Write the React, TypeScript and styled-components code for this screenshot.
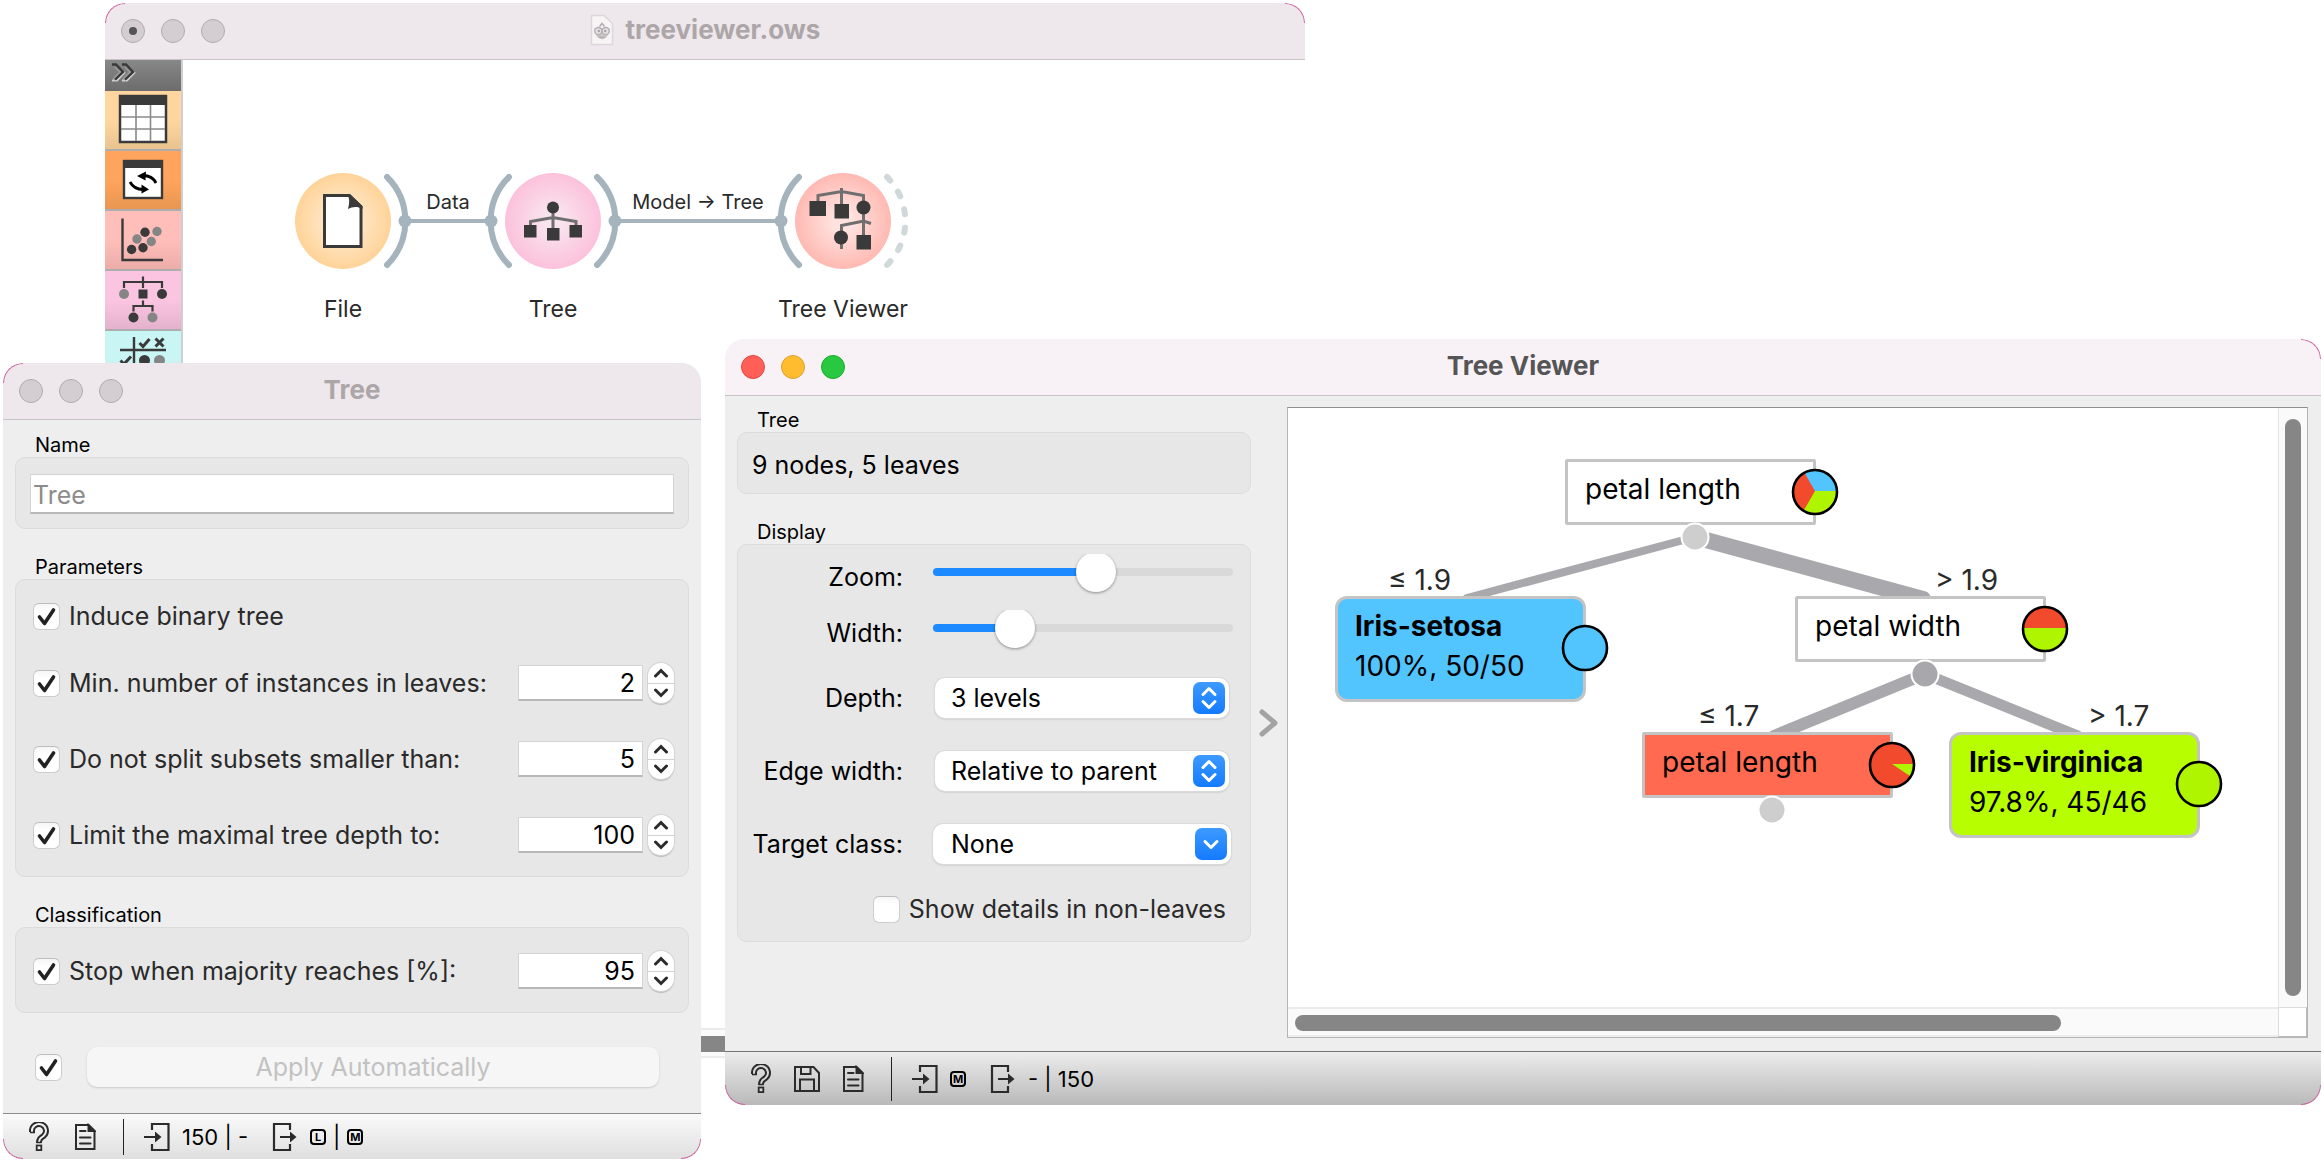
import React, { useId, useState } from "react";
import styled, { createGlobalStyle, css } from "styled-components";

const GlobalStyle = createGlobalStyle`
  *, *::before, *::after { box-sizing: border-box; }
  body {
    margin: 0;
    background: #fff;
    font-family: Inter, "Noto Sans", "Liberation Sans", sans-serif;
    color: #000;
  }
  button, input, select { font: inherit; color: inherit; margin: 0; }
`;

/* ---------- windows ---------- */

const Desktop = styled.main`
  position: relative;
  min-height: 100vh;
  overflow: hidden;
`;

const Win = styled.section`
  position: absolute;
  border-radius: 20px;
  overflow: hidden;
  background: #eee;
`;

const CanvasWindow = styled(Win)`
  left: 105px;
  top: 3px;
  width: 1200px;
  background: #fff;
`;

const TreeWindow = styled(Win)`
  left: 3px;
  top: 363px;
  width: 698px;
`;

const ViewerWindow = styled(Win)`
  left: 725px;
  right: 3px;
  top: 339px;
`;

const Corner = styled.span<{ $v: "top" | "bottom"; $h: "left" | "right" }>`
  position: absolute;
  ${(p) => p.$v}: 0;
  ${(p) => p.$h}: 0;
  width: 20px;
  height: 20px;
  border-${(p) => p.$v}: 1px solid #d0629f;
  border-${(p) => p.$h}: 1px solid #d0629f;
  border-${(p) => p.$v}-${(p) => p.$h}-radius: 20px;
  pointer-events: none;
`;

const TitleBar = styled.header<{ $active?: boolean }>`
  display: grid;
  grid-template-columns: 1fr auto 1fr;
  align-items: center;
  height: 57px;
  padding: 0 16px;
  background: ${(p) => (p.$active ? "#f8f2f7" : "#eee7eb")};
  border-bottom: 1px solid #c8c3c6;
`;

const Lights = styled.div`
  display: flex;
  gap: 16px;
`;

const Light = styled.button<{ $fill?: string; $edge?: string; $dot?: boolean }>`
  display: grid;
  place-items: center;
  width: 24px;
  height: 24px;
  padding: 0;
  border-radius: 50%;
  background: ${(p) => p.$fill ?? "#d4ced2"};
  border: 1px solid ${(p) => p.$edge ?? "#b0abae"};
  ${(p) =>
    p.$dot &&
    css`
      &::after {
        content: "";
        width: 8px;
        height: 8px;
        border-radius: 50%;
        background: #555;
      }
    `}
`;

const Title = styled.h1<{ $active?: boolean }>`
  display: flex;
  align-items: center;
  gap: 12px;
  margin: 0;
  padding-bottom: 2px;
  font-size: 26px;
  line-height: 32px;
  font-weight: 700;
  color: ${(p) => (p.$active ? "#555" : "#aca6a9")};
`;

/* ---------- workflow window ---------- */

const WorkBody = styled.div`
  display: grid;
  grid-template-columns: 78px 1fr;
`;

const Sidebar = styled.nav`
  border-right: 2px solid #cfcfd3;
  background: #fff;
`;

const Expand = styled.button`
  display: block;
  width: 100%;
  height: 31px;
  padding: 0;
  border: 0;
  background: linear-gradient(#888, #6c6c6c);
`;

const Category = styled.button<{ $top: string; $bottom: string }>`
  display: block;
  width: 100%;
  height: 60px;
  padding: 0;
  border: 0;
  border-bottom: 2px solid #adadad;
  background: linear-gradient(${(p) => p.$top} 50%, ${(p) => p.$bottom});
`;

const Block = styled.svg`
  display: block;
`;

const Scheme = styled.div`
  display: flex;
  flex-direction: column;
  min-height: 998px;
`;

const SchemeCanvas = styled.div`
  position: relative;
  flex: 1;
`;

const Links = styled.svg`
  position: absolute;
  left: 0;
  top: 0;
`;

const Caption = styled.span<{ $x: number; $y: number; $small?: boolean }>`
  position: absolute;
  left: ${(p) => p.$x}px;
  top: ${(p) => p.$y}px;
  transform: translateX(-50%);
  white-space: nowrap;
  color: #2a2a2a;
  font-size: ${(p) => (p.$small ? 20 : 23)}px;
  line-height: 28px;
`;

const HScroll = styled.div`
  height: 30px;
  padding: 6px 7px;
  border-top: 2px solid #ebebeb;
  border-bottom: 2px solid #ececec;
  background: #fafafa;
`;

const HThumb = styled.div<{ $share?: string }>`
  width: ${(p) => p.$share ?? "100%"};
  height: 16px;
  border-radius: 8px;
  background: #868686;
`;

/* ---------- shared form parts ---------- */

const Legend = styled.h2`
  margin: 0;
  padding-left: 20px;
  font-size: 20px;
  line-height: 24px;
  font-weight: 400;
`;

const Group = styled.section`
  display: flex;
  flex-direction: column;
`;

const Panel = styled.div<{ $pad: string }>`
  padding: ${(p) => p.$pad};
  border: 1px solid #dcdcdc;
  border-radius: 10px;
  background: #e7e7e7;
`;

const CheckBox = styled.span`
  position: relative;
  flex: none;
  display: block;
  width: 27px;
  height: 27px;
`;

const CheckInput = styled.input`
  appearance: none;
  display: block;
  width: 27px;
  height: 27px;
  border-radius: 6px;
  border: 1px solid #cdcdcd;
  border-top-color: #bdbdbd;
  background: linear-gradient(#f6f6f6, #fff 30%);
`;

const CheckMark = styled.svg`
  position: absolute;
  inset: 0;
  pointer-events: none;
`;

const CheckLabel = styled.label`
  font-size: 25px;
  line-height: 32px;
  color: #2a2a2a;
  white-space: nowrap;
`;

function Check({ id, initial = true, label }: { id: string; initial?: boolean; label?: string }) {
  const [on, setOn] = useState(initial);
  return (
    <CheckBox>
      <CheckInput id={id} type="checkbox" aria-label={label} checked={on} onChange={(e) => setOn(e.target.checked)} />
      {on && (
        <CheckMark viewBox="0 0 27 27" aria-hidden="true">
          <path d="M6.5 14 L11.5 20.5 L20.5 7" fill="none" stroke="#222" strokeWidth="3.6" strokeLinecap="round" strokeLinejoin="round" />
        </CheckMark>
      )}
    </CheckBox>
  );
}

/* ---------- tree settings window ---------- */

const SettingsBody = styled.div`
  display: flex;
  flex-direction: column;
  gap: 26px;
  padding: 13px 12px 26px;
`;

const NameInput = styled.input`
  display: block;
  width: 100%;
  height: 40px;
  padding: 2px 2px 0;
  border: 1px solid #d4d4d4;
  border-bottom: 2px solid #b8b8b8;
  border-radius: 0;
  background: #fff;
  font-size: 25px;
  &::placeholder { color: #8c8c8c; opacity: 1; }
`;

const OptionList = styled.div`
  display: flex;
  flex-direction: column;
  gap: 36px;
`;

const OptionRow = styled.div`
  display: flex;
  align-items: center;
  gap: 9px;
  height: 40px;
`;

const FirstOption = styled(OptionRow)`
  margin-bottom: 27px;
`;

const Spin = styled.div`
  display: flex;
  align-items: center;
  gap: 5px;
  margin-left: auto;
`;

const SpinInput = styled.input`
  width: 125px;
  height: 36px;
  padding: 0 7px;
  border: 1px solid #d4d4d4;
  border-bottom: 2px solid #b8b8b8;
  border-radius: 0;
  background: #fff;
  text-align: right;
  font-size: 25px;
  appearance: textfield;
  &::-webkit-inner-spin-button { appearance: none; margin: 0; }
`;

const Stepper = styled.div`
  display: flex;
  flex-direction: column;
  width: 26px;
  height: 40px;
  border-radius: 13px;
  background: #fff;
  overflow: hidden;
  box-shadow: 0 0 0 1px #d4d4d4, 0 2px 1px #bbb;
`;

const Step = styled.button`
  display: grid;
  place-items: center;
  flex: 1;
  padding: 0;
  border: 0;
  background: none;
  & + & { border-top: 1px solid #d0d0d0; }
`;

function SpinRow({ text, start }: { text: string; start: number }) {
  const id = useId();
  const [n, setN] = useState(start);
  return (
    <OptionRow>
      <Check id={id} />
      <CheckLabel htmlFor={id}>{text}</CheckLabel>
      <Spin>
        <SpinInput type="number" aria-label={text} value={n} onChange={(e) => setN(Number(e.target.value))} />
        <Stepper>
          <Step type="button" aria-label="Increase" onClick={() => setN(n + 1)}>
            <svg width="16" height="10" viewBox="0 0 16 10">
              <path d="M2.5 8 L8 2.5 L13.5 8" fill="none" stroke="#2a2a2a" strokeWidth="3" strokeLinecap="round" />
            </svg>
          </Step>
          <Step type="button" aria-label="Decrease" onClick={() => setN(n - 1)}>
            <svg width="16" height="10" viewBox="0 0 16 10">
              <path d="M2.5 2 L8 7.5 L13.5 2" fill="none" stroke="#2a2a2a" strokeWidth="3" strokeLinecap="round" />
            </svg>
          </Step>
        </Stepper>
      </Spin>
    </OptionRow>
  );
}

const ApplyRow = styled.div`
  display: flex;
  align-items: center;
  gap: 25px;
  padding: 8px 30px 0 20px;
`;

const ApplyButton = styled.button`
  flex: 1;
  height: 40px;
  padding: 0;
  border: 0;
  border-radius: 10px;
  background: #f6f6f6;
  box-shadow: 0 1px 2px #c8c8c8;
  font-size: 25px;
  line-height: 38px;
  color: #c2c2c2;
`;

/* ---------- status bar ---------- */

const StatusBar = styled.footer<{ $tall?: boolean }>`
  display: flex;
  align-items: center;
  height: ${(p) => (p.$tall ? 54 : 46)}px;
  padding-left: 13px;
  border-top: 1px solid ${(p) => (p.$tall ? "#757575" : "#8c8c8c")};
  background: ${(p) => (p.$tall ? "linear-gradient(#ececec, #b9b9b9)" : "linear-gradient(#fafafa, #dfdfdf)")};
  font-size: 22px;
  line-height: 28px;
`;

const Tool = styled.button`
  display: grid;
  place-items: center;
  width: 46px;
  height: 32px;
  padding: 0;
  border: 0;
  background: none;
`;

const Divider = styled.span<{ $tall?: boolean }>`
  width: 1px;
  height: ${(p) => (p.$tall ? 44 : 36)}px;
  margin: 0 20px 0 15px;
  background: #222;
`;

const Port = styled.span`
  display: flex;
  align-items: center;
  gap: 12px;
  margin-right: 24px;
  white-space: pre;
`;

const PortValue = styled.span`
  display: flex;
  align-items: center;
  gap: 7px;
`;

const KeyCap = styled.span`
  display: grid;
  place-items: center;
  width: 16px;
  height: 16px;
  border: 2px solid #000;
  border-radius: 4px;
  font-size: 11px;
  line-height: 12px;
  font-weight: 700;
`;

function HelpIcon({ inner }: { inner: string }) {
  const hook = "M4 10 V9.5 A7 6.8 0 1 1 15.5 14 C12.5 16 11 17 11 21";
  return (
    <svg width="22" height="30" viewBox="0 0 22 30" aria-hidden="true">
      <path d={hook} fill="none" stroke="#2b2b2b" strokeWidth="6" />
      <path d={hook} fill="none" stroke={inner} strokeWidth="2" />
      <path d="M2 10.5 H7 M8.5 20.5 H13.5" stroke="#2b2b2b" strokeWidth="1.6" />
      <rect x="8.7" y="23.5" width="4.6" height="4.6" fill={inner} stroke="#2b2b2b" strokeWidth="1.8" />
    </svg>
  );
}

function SaveIcon() {
  return (
    <svg width="28" height="28" viewBox="0 0 28 28" aria-hidden="true" fill="none" stroke="#2b2b2b" strokeWidth="2">
      <path d="M2 2 H20.5 L26 8 V26 H2 Z" />
      <path d="M8 2 V9 H17.5 V2 M7 26 V14.5 H21 V26" />
    </svg>
  );
}

function ReportIcon() {
  return (
    <svg width="22" height="28" viewBox="0 0 22 28" aria-hidden="true" fill="none" stroke="#2b2b2b" strokeWidth="2">
      <path d="M2 2 H14.5 L20.5 8 V26 H2 Z" />
      <path d="M14.5 2 V8 H20.5 Z" fill="#2b2b2b" />
      <path d="M6 8 H11.5 M6 14.5 H16.5 M6 20.5 H16.5" strokeLinecap="round" />
    </svg>
  );
}

function InputIcon() {
  return (
    <svg width="26" height="30" viewBox="0 0 26 30" aria-hidden="true" fill="none" stroke="#2b2b2b" strokeWidth="2.2">
      <path d="M8 8 V2 H24.5 V28 H8 V22 M0 15 H13" />
      <path d="M11 9.5 L17.5 15 L11 20.5 Z" fill="#2b2b2b" stroke="none" />
    </svg>
  );
}

function OutputIcon() {
  return (
    <svg width="26" height="30" viewBox="0 0 26 30" aria-hidden="true" fill="none" stroke="#2b2b2b" strokeWidth="2.2">
      <path d="M18 8 V2 H2 V28 H18 V22 M8 15 H20" />
      <path d="M18 9.5 L24.5 15 L18 20.5 Z" fill="#2b2b2b" stroke="none" />
    </svg>
  );
}

/* ---------- tree viewer window ---------- */

const ViewerBody = styled.div`
  display: grid;
  grid-template-columns: 514px 36px 1fr;
  padding: 11px 13px 13px 12px;
`;

const Controls = styled.div`
  display: flex;
  flex-direction: column;
  gap: 26px;
  padding-top: 1px;
`;

const Info = styled.p`
  margin: 0;
  font-size: 25px;
  line-height: 32px;
`;

const Form = styled.div`
  display: flex;
  flex-direction: column;
`;

const Field = styled.div<{ $gap: number; $slider?: boolean }>`
  display: grid;
  grid-template-columns: 165px 1fr;
  column-gap: 30px;
  align-items: ${(p) => (p.$slider ? "start" : "center")};
  margin-top: ${(p) => p.$gap}px;
  font-size: 25px;
  line-height: ${(p) => (p.$slider ? 46 : 40)}px;
`;

const FieldLabel = styled.label`
  text-align: right;
  white-space: nowrap;
`;

const SliderClip = styled.div`
  height: 42px;
  overflow: hidden;
`;

const Slider = styled.input`
  appearance: none;
  display: block;
  width: 100%;
  height: 36px;
  background: transparent;
  &::-webkit-slider-runnable-track {
    height: 8px;
    border-radius: 4px;
    background: linear-gradient(to right, #1d8aff var(--fill), #d9d9d9 var(--fill));
  }
  &::-webkit-slider-thumb {
    appearance: none;
    width: 40px;
    height: 40px;
    margin-top: -16px;
    border-radius: 50%;
    background: #fff;
    box-shadow: 0 1px 3px rgba(0, 0, 0, 0.4);
  }
`;

function SliderField({ text, start, gap }: { text: string; start: number; gap: number }) {
  const id = useId();
  const [v, setV] = useState(start);
  return (
    <Field $gap={gap} $slider>
      <FieldLabel htmlFor={id}>{text}</FieldLabel>
      <SliderClip>
        <Slider
          id={id}
          type="range"
          min={0}
          max={100}
          value={v}
          onChange={(e) => setV(Number(e.target.value))}
          style={{ "--fill": `${v}%` } as React.CSSProperties}
        />
      </SliderClip>
    </Field>
  );
}

const SelectBox = styled.div<{ $wide?: boolean }>`
  position: relative;
  height: 40px;
  margin: ${(p) => (p.$wide ? "0 2px 0 0" : "0 4px 0 2px")};
`;

const Select = styled.select<{ $wide?: boolean }>`
  appearance: none;
  display: block;
  width: 100%;
  height: 40px;
  padding: 0 40px 2px ${(p) => (p.$wide ? 18 : 16)}px;
  border: 0;
  border-radius: 10px;
  background: #fff;
  box-shadow: 0 0 0 1px #dadada, 0 1px 2px #aaa;
  font-size: 25px;
`;

const SelectArrow = styled.svg`
  position: absolute;
  right: 4px;
  top: 4px;
  border-radius: 7px;
  background: linear-gradient(#3d9aff, #147aff);
  pointer-events: none;
`;

function SelectField({ text, options, gap, combo }: { text: string; options: string[]; gap: number; combo?: boolean }) {
  const id = useId();
  return (
    <Field $gap={gap}>
      <FieldLabel htmlFor={id}>{text}</FieldLabel>
      <SelectBox $wide={combo}>
        <Select id={id} $wide={combo}>
          {options.map((o) => (
            <option key={o}>{o}</option>
          ))}
        </Select>
        <SelectArrow width="32" height="32" viewBox="0 0 32 32" aria-hidden="true">
          <path
            d={combo ? "M10 13.5 L16 19.5 L22 13.5" : "M10 12.5 L16 6.5 L22 12.5 M10 19.5 L16 25.5 L22 19.5"}
            fill="none"
            stroke="#fff"
            strokeWidth="3"
            strokeLinecap="round"
            strokeLinejoin="round"
          />
        </SelectArrow>
      </SelectBox>
    </Field>
  );
}

const DetailRow = styled.div`
  display: flex;
  align-items: center;
  justify-content: flex-end;
  gap: 9px;
  height: 28px;
  margin-top: 31px;
  padding-right: 7px;
`;

const Collapse = styled.button`
  align-self: center;
  display: grid;
  place-items: center;
  height: 40px;
  padding: 0;
  border: 0;
  background: none;
`;

const View = styled.div`
  display: grid;
  grid-template-columns: 1fr 29px;
  grid-template-rows: minmax(599px, auto) 30px;
  border: 1px solid #b5b5b5;
  border-top-color: #8f8f8f;
  background: #fff;
`;

const TreeCanvas = styled.div`
  position: relative;
  overflow: hidden;
`;

const VScroll = styled.div`
  display: flex;
  justify-content: center;
  padding: 11px 0;
  border-left: 1px solid #e6e6e6;
  background: #fafafa;
`;

const VThumb = styled.div`
  width: 16px;
  border-radius: 8px;
  background: #868686;
`;

const ScrollCorner = styled.div`
  border: 1px solid #ddd;
  border-right-color: #bbb;
  border-bottom-color: #bbb;
  background: #fff;
`;

const NodeBox = styled.div<{ $x: number; $y: number; $fill: string; $leaf?: boolean }>`
  position: absolute;
  left: ${(p) => p.$x}px;
  top: ${(p) => p.$y}px;
  width: 251px;
  height: ${(p) => (p.$leaf ? 106 : 66)}px;
  padding: 7px 17px;
  border: 3px solid #c4c4c4;
  border-radius: ${(p) => (p.$leaf ? 12 : 2)}px;
  background: ${(p) => p.$fill};
  font-size: 28px;
  line-height: 40px;
  white-space: nowrap;
`;

const NodeLine = styled.div<{ $bold?: boolean }>`
  font-weight: ${(p) => (p.$bold ? 700 : 400)};
`;

const Pie = styled.svg<{ $leaf?: boolean }>`
  position: absolute;
  right: -26px;
  top: ${(p) => (p.$leaf ? 25 : 6)}px;
`;

const Split = styled.span<{ $x: number; $y: number }>`
  position: absolute;
  left: ${(p) => p.$x}px;
  top: ${(p) => p.$y}px;
  font-size: 28px;
  line-height: 32px;
  color: #2a2a2a;
  white-space: nowrap;
`;

type Slice = { from: number; to: number; color: string };

function slicePath({ from, to }: Slice) {
  const point = (deg: number) => {
    const a = (deg * Math.PI) / 180;
    return `${24 + 22 * Math.cos(a)} ${23 - 22 * Math.sin(a)}`;
  };
  return `M24 23 L${point(from)} A22 22 0 ${to - from > 180 ? 1 : 0} 0 ${point(to)} Z`;
}

const BLUE = "#52c5ff";
const RED = "#f24a2d";
const GREEN = "#b0f500";

type TreeNode = {
  x: number;
  y: number;
  fill: string;
  lines: string[];
  leaf?: boolean;
  base: string;
  slices: Slice[];
};

const NODES: TreeNode[] = [
  {
    x: 277, y: 51, fill: "#fff", lines: ["petal length"], base: RED,
    slices: [
      { from: 0, to: 120, color: BLUE },
      { from: 240, to: 360, color: GREEN },
    ],
  },
  { x: 47, y: 188, fill: BLUE, lines: ["Iris-setosa", "100%, 50/50"], leaf: true, base: BLUE, slices: [] },
  { x: 507, y: 188, fill: "#fff", lines: ["petal width"], base: GREEN, slices: [{ from: 0, to: 180, color: RED }] },
  { x: 354, y: 324, fill: "#ff6a50", lines: ["petal length"], base: RED, slices: [{ from: 326, to: 360, color: GREEN }] },
  { x: 661, y: 324, fill: "#b7ff00", lines: ["Iris-virginica", "97.8%, 45/46"], leaf: true, base: GREEN, slices: [] },
];

const EDGES = [
  { x1: 407, y1: 129, x2: 179, y2: 190, w: 8 },
  { x1: 407, y1: 129, x2: 635, y2: 191, w: 16 },
  { x1: 637, y1: 266, x2: 486, y2: 328, w: 12 },
  { x1: 637, y1: 266, x2: 790, y2: 328, w: 11 },
];

const SPLITS = [
  { x: 100, y: 156, text: "≤ 1.9" },
  { x: 647, y: 156, text: "> 1.9" },
  { x: 410, y: 292, text: "≤ 1.7" },
  { x: 800, y: 292, text: "> 1.7" },
];

const JOINTS = [
  { x: 407, y: 129, color: "#cecece" },
  { x: 637, y: 266, color: "#a8a8ac" },
  { x: 484, y: 402, color: "#cecece" },
];

const JointLayer = styled(Links)`
  pointer-events: none;
`;

function TreeDrawing() {
  return (
    <TreeCanvas>
      <Links width="990" height="599" viewBox="0 0 990 599" aria-hidden="true">
        {EDGES.map((e, i) => (
          <line key={i} x1={e.x1} y1={e.y1} x2={e.x2} y2={e.y2} stroke="#a9a8ad" strokeWidth={e.w} strokeLinecap="round" />
        ))}
      </Links>
      {NODES.map((n, i) => (
        <NodeBox key={i} $x={n.x} $y={n.y} $fill={n.fill} $leaf={n.leaf}>
          {n.lines.map((t, k) => (
            <NodeLine key={t} $bold={n.leaf && k === 0}>{t}</NodeLine>
          ))}
          <Pie $leaf={n.leaf} width="48" height="48" viewBox="0 0 48 48" aria-hidden="true">
            <circle cx="24" cy="24" r="22" fill={n.base} />
            {n.slices.map((s) => (
              <path key={s.from} d={slicePath(s)} fill={s.color} />
            ))}
            <circle cx="24" cy="24" r="22" fill="none" stroke="#000" strokeWidth="2.6" />
          </Pie>
        </NodeBox>
      ))}
      <JointLayer width="990" height="599" viewBox="0 0 990 599" aria-hidden="true">
        {JOINTS.map((j, i) => (
          <circle key={i} cx={j.x} cy={j.y} r="13.5" fill={j.color} stroke="#fff" strokeWidth="2" />
        ))}
      </JointLayer>
      {SPLITS.map((s) => (
        <Split key={s.text} $x={s.x} $y={s.y}>{s.text}</Split>
      ))}
    </TreeCanvas>
  );
}

/* ---------- drawings of the workflow window ---------- */

const D = "#3a3a3a";
const G = "#858585";

function CategoryIcons() {
  return (
    <>
      <Category type="button" aria-label="Data" $top="#ffd6a0" $bottom="#e9c48f">
        <Block width="76" height="58" viewBox="0 0 76 58">
          <rect x="15" y="5" width="46" height="46" fill="#fff" stroke={D} strokeWidth="2.5" />
          <rect x="14" y="4" width="48" height="10" fill={D} />
          <path d="M31 14 V50 M45.5 14 V50 M16 26 H60 M16 38 H60" stroke="#8a8a8a" strokeWidth="1.6" />
        </Block>
      </Category>
      <Category type="button" aria-label="Transform" $top="#ffa45c" $bottom="#e89652">
        <Block width="76" height="58" viewBox="0 0 76 58">
          <rect x="19" y="10" width="38" height="37" fill="#fff" stroke={D} strokeWidth="2.4" />
          <rect x="18" y="9" width="40" height="8" fill={D} />
          <path d="M51 32 C48 26 44 24.5 38 24.5 M25 31 C28 36.5 32 38.5 38 38.5" fill="none" stroke="#000" strokeWidth="2.8" />
          <path d="M32 25 L41 20.5 L40.5 29.5 Z M44 38.5 L36.5 33.5 L36.5 42.5 Z" />
        </Block>
      </Category>
      <Category type="button" aria-label="Visualize" $top="#ffbeb9" $bottom="#ecaca8">
        <Block width="76" height="58" viewBox="0 0 76 58">
          <path d="M17.5 7.5 V49 H58" fill="none" stroke={D} strokeWidth="2.4" />
          <g fill={G}>
            <circle cx="52" cy="20.5" r="4.7" />
            <circle cx="32" cy="28" r="4.7" />
            <circle cx="46.3" cy="30.5" r="4.7" />
          </g>
          <g fill={D}>
            <circle cx="40" cy="21.3" r="4.7" />
            <circle cx="26.6" cy="38.5" r="4.7" />
            <circle cx="38" cy="36.8" r="4.7" />
          </g>
        </Block>
      </Category>
      <Category type="button" aria-label="Model" $top="#fbc5e2" $bottom="#e4b2cd">
        <Block width="76" height="58" viewBox="0 0 76 58">
          <path d="M19 17 V11 H57 V17 M38 5.5 V17 M38 29.5 V35 M28.5 40.5 V35 H47.5 V40.5" fill="none" stroke={D} strokeWidth="2.2" />
          <rect x="33.5" y="18.5" width="9" height="9" fill={D} />
          <g fill={G}>
            <circle cx="19" cy="23" r="5" />
            <circle cx="47.5" cy="46.5" r="5" />
          </g>
          <g fill={D}>
            <circle cx="57" cy="23" r="5" />
            <circle cx="28.5" cy="46.5" r="5" />
          </g>
        </Block>
      </Category>
      <Category type="button" aria-label="Evaluate" $top="#c9f6f5" $bottom="#b6dfde">
        <Block width="76" height="58" viewBox="0 0 76 58">
          <path d="M29 6 V52 M15 19 H61" fill="none" stroke={D} strokeWidth="2.4" />
          <path
            d="M34.5 12 L38 15.5 L44.5 8 M50.5 7.5 L58.5 15.5 M58.5 7.5 L50.5 15.5 M15.5 29.5 L19 33 L26 25.5"
            fill="none"
            stroke={D}
            strokeWidth="3"
          />
          <circle cx="39.5" cy="29.5" r="5.5" fill={D} />
          <circle cx="54.5" cy="29.5" r="5.5" fill={G} />
        </Block>
      </Category>
    </>
  );
}

function Workflow() {
  const link = "#a4b3bc";
  return (
    <Links width="900" height="300" viewBox="183 60 900 300" aria-hidden="true">
      <defs>
        <radialGradient id="gFile"><stop offset="0.2" stopColor="#ffebd1" /><stop offset="1" stopColor="#ffd398" /></radialGradient>
        <radialGradient id="gTree"><stop offset="0.2" stopColor="#f9e3ed" /><stop offset="1" stopColor="#fcc1dc" /></radialGradient>
        <radialGradient id="gView"><stop offset="0.2" stopColor="#ffe2df" /><stop offset="1" stopColor="#ffb9b2" /></radialGradient>
      </defs>
      <circle cx="343" cy="221" r="48" fill="url(#gFile)" />
      <circle cx="553" cy="221" r="48" fill="url(#gTree)" />
      <circle cx="843" cy="221" r="48" fill="url(#gView)" />
      <g fill="none" stroke={link} strokeWidth="6" strokeLinecap="round">
        <path d="M387 177 A62 62 0 0 1 387 265" />
        <path d="M509 177 A62 62 0 0 0 509 265" />
        <path d="M597 177 A62 62 0 0 1 597 265" />
        <path d="M799 177 A62 62 0 0 0 799 265" />
        <path d="M887 177 A62 62 0 0 1 887 265" stroke="#d0d8da" strokeDasharray="5 13.5" />
      </g>
      <path d="M405 221 H491 M615 221 H781" stroke={link} strokeWidth="4" />
      <g fill={link}>
        <circle cx="405" cy="221" r="6.5" />
        <circle cx="491" cy="221" r="6.5" />
        <circle cx="615" cy="221" r="6.5" />
        <circle cx="781" cy="221" r="6.5" />
      </g>

      <path d="M324.5 195.5 H349 L361 207 V246.5 H324.5 Z" fill="#fff" stroke={D} strokeWidth="3" />
      <path d="M347 194 H350 L362.5 206 V209 C357 206 352 207 348 209 C349.5 203 350 198 347 194 Z" fill={D} />

      <g fill="none" stroke="#6f6f6f" strokeWidth="3">
        <path d="M553 212 V229 M530.5 226 V221.5 L553 217.5 L576 221.5 V226" />
        <path d="M841.5 188 V205 M818 202 V195.5 L841.5 191.5 L863.5 195.5 V236 M871 223.5 L863.5 221 L841.5 225.5 V249" />
      </g>
      <g fill={D}>
        <circle cx="553" cy="207.5" r="6" />
        <rect x="524" y="225" width="12.5" height="12.5" />
        <rect x="547" y="228" width="12.5" height="12.5" />
        <rect x="569.5" y="225" width="12.5" height="12.5" />
        <rect x="809.5" y="201" width="16.5" height="15" />
        <rect x="834.5" y="204" width="14.5" height="14.5" />
        <circle cx="863.5" cy="207.5" r="7" />
        <circle cx="841" cy="237.5" r="7" />
        <rect x="856.5" y="235" width="14.5" height="14.5" />
      </g>
    </Links>
  );
}

function DocIcon() {
  return (
    <svg width="24" height="32" viewBox="0 0 24 32" aria-hidden="true">
      <path d="M1.5 1.5 H14 L22.5 9.5 V30.5 H1.5 Z" fill="#f7f4f6" stroke="#dcd7da" strokeWidth="1.5" />
      <path d="M4.5 14 C4.5 29 19.5 29 19.5 14 Z" fill="#cbc7c9" />
      <g fill="#e6e2e4" stroke="#b5b0b3" strokeWidth="1.5">
        <circle cx="8.3" cy="17" r="3.6" />
        <circle cx="15.7" cy="17" r="3.6" />
      </g>
      <g fill="#a5a0a3">
        <circle cx="8.8" cy="17" r="1.2" />
        <circle cx="15.2" cy="17" r="1.2" />
      </g>
      <path d="M9 22.5 C11 24 13 24 15 22.5 M9.5 12.5 L12 9.5 L14.5 12.5" fill="none" stroke="#b0abae" strokeWidth="1.5" />
    </svg>
  );
}

export default function App() {
  const induceId = useId();
  const autoId = useId();
  const detailId = useId();
  const nameId = useId();
  return (
    <>
      <GlobalStyle />
      <Desktop>
        <CanvasWindow>
          <TitleBar>
            <Lights>
              <Light type="button" aria-label="Close" $dot />
              <Light type="button" aria-label="Minimize" />
              <Light type="button" aria-label="Zoom" />
            </Lights>
            <Title><DocIcon />treeviewer.ows</Title>
          </TitleBar>
          <WorkBody>
            <Sidebar>
              <Expand type="button" aria-label="Expand toolbox">
                <Block width="76" height="31" viewBox="0 0 76 31">
                  <path d="M7 20.5 H12 L20 12 M17 20.5 H22 L30 12" fill="none" stroke="#cfcfcf" strokeWidth="2" />
                  <path d="M7 4.5 H11 L18 12 L10 19.5 M17 4.5 H21 L28 12 L20 19.5" fill="none" stroke="#3a3a3a" strokeWidth="2.4" />
                  <path d="M10 7 L15 12 L8 19 M20 7 L25 12 L18 19" fill="none" stroke="#9a9a9a" strokeWidth="1.6" />
                </Block>
              </Expand>
              <CategoryIcons />
            </Sidebar>
            <Scheme>
              <SchemeCanvas>
                <Workflow />
                <Caption $x={265} $y={128} $small>Data</Caption>
                <Caption $x={515} $y={128} $small>Model → Tree</Caption>
                <Caption $x={160} $y={235}>File</Caption>
                <Caption $x={370} $y={235}>Tree</Caption>
                <Caption $x={660} $y={235}>Tree Viewer</Caption>
              </SchemeCanvas>
              <HScroll><HThumb /></HScroll>
            </Scheme>
          </WorkBody>
          <Corner $v="top" $h="left" />
          <Corner $v="top" $h="right" />
        </CanvasWindow>

        <TreeWindow>
          <TitleBar>
            <Lights>
              <Light type="button" aria-label="Close" />
              <Light type="button" aria-label="Minimize" />
              <Light type="button" aria-label="Zoom" />
            </Lights>
            <Title>Tree</Title>
          </TitleBar>
          <SettingsBody>
            <Group>
              <Legend as="label" htmlFor={nameId}>Name</Legend>
              <Panel $pad="16px 14px 14px">
                <NameInput id={nameId} type="text" placeholder="Tree" />
              </Panel>
            </Group>
            <Group>
              <Legend>Parameters</Legend>
              <Panel $pad="16px 14px 21px 17px">
                <FirstOption>
                  <Check id={induceId} />
                  <CheckLabel htmlFor={induceId}>Induce binary tree</CheckLabel>
                </FirstOption>
                <OptionList>
                  <SpinRow text="Min. number of instances in leaves:" start={2} />
                  <SpinRow text="Do not split subsets smaller than:" start={5} />
                  <SpinRow text="Limit the maximal tree depth to:" start={100} />
                </OptionList>
              </Panel>
            </Group>
            <Group>
              <Legend>Classification</Legend>
              <Panel $pad="23px 14px 21px 17px">
                <SpinRow text="Stop when majority reaches [%]:" start={95} />
              </Panel>
            </Group>
            <ApplyRow>
              <Check id={autoId} label="Apply automatically" />
              <ApplyButton type="button" disabled>Apply Automatically</ApplyButton>
            </ApplyRow>
          </SettingsBody>
          <StatusBar>
            <Tool type="button" aria-label="Help"><HelpIcon inner="#efefef" /></Tool>
            <Tool type="button" aria-label="Report"><ReportIcon /></Tool>
            <Divider />
            <Port><InputIcon />150 | -</Port>
            <Port>
              <OutputIcon />
              <PortValue><KeyCap>L</KeyCap>|<KeyCap>M</KeyCap></PortValue>
            </Port>
          </StatusBar>
          <Corner $v="top" $h="left" />
          <Corner $v="bottom" $h="left" />
          <Corner $v="bottom" $h="right" />
        </TreeWindow>

        <ViewerWindow>
          <TitleBar $active>
            <Lights>
              <Light type="button" aria-label="Close" $fill="#ff5f57" $edge="#e2483f" />
              <Light type="button" aria-label="Minimize" $fill="#febc2e" $edge="#dea032" />
              <Light type="button" aria-label="Zoom" $fill="#28c840" $edge="#1bac2c" />
            </Lights>
            <Title $active>Tree Viewer</Title>
          </TitleBar>
          <ViewerBody>
            <Controls>
              <Group>
                <Legend>Tree</Legend>
                <Panel $pad="16px 14px 12px">
                  <Info>9 nodes, 5 leaves</Info>
                </Panel>
              </Group>
              <Group>
                <Legend>Display</Legend>
                <Panel $pad="9px 17px 18px 0">
                  <Form>
                    <SliderField text="Zoom:" start={55} gap={0} />
                    <SliderField text="Width:" start={24} gap={10} />
                    <SelectField text="Depth:" options={["3 levels", "4 levels", "Unlimited"]} gap={22} />
                    <SelectField text="Edge width:" options={["Relative to parent", "Relative to root", "Fixed"]} gap={33} />
                    <SelectField text="Target class:" options={["None", "Iris-setosa", "Iris-versicolor", "Iris-virginica"]} gap={33} combo />
                    <DetailRow>
                      <Check id={detailId} initial={false} />
                      <CheckLabel htmlFor={detailId}>Show details in non-leaves</CheckLabel>
                    </DetailRow>
                  </Form>
                </Panel>
              </Group>
            </Controls>
            <Collapse type="button" aria-label="Collapse controls">
              <svg width="22" height="30" viewBox="0 0 22 30">
                <path d="M4 4 L17 15 L4 26" fill="none" stroke="#a3a3a3" strokeWidth="5" strokeLinecap="round" strokeLinejoin="round" />
              </svg>
            </Collapse>
            <View>
              <TreeDrawing />
              <VScroll><VThumb /></VScroll>
              <HScroll><HThumb $share="78.5%" /></HScroll>
              <ScrollCorner />
            </View>
          </ViewerBody>
          <StatusBar $tall>
            <Tool type="button" aria-label="Help"><HelpIcon inner="#d6d6d6" /></Tool>
            <Tool type="button" aria-label="Save image"><SaveIcon /></Tool>
            <Tool type="button" aria-label="Report"><ReportIcon /></Tool>
            <Divider $tall />
            <Port><InputIcon /><KeyCap>M</KeyCap></Port>
            <Port><OutputIcon />- | 150</Port>
          </StatusBar>
          <Corner $v="top" $h="right" />
          <Corner $v="bottom" $h="left" />
          <Corner $v="bottom" $h="right" />
        </ViewerWindow>
      </Desktop>
    </>
  );
}
